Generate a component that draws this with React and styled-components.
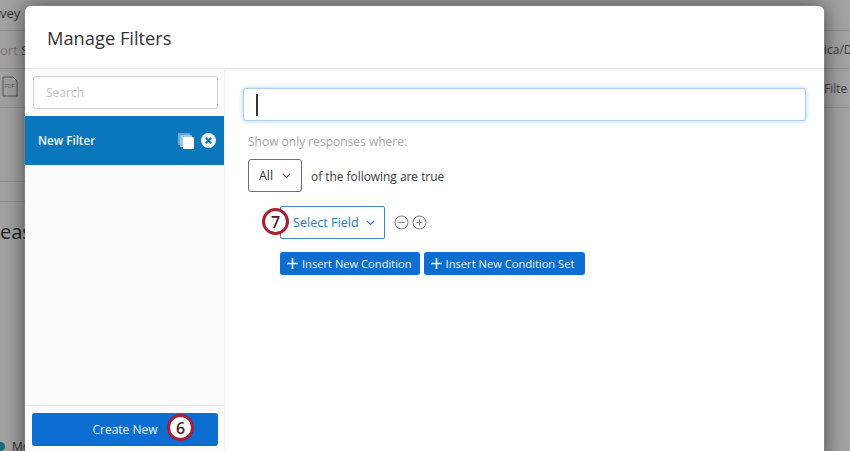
import React from 'react'
import styled, { createGlobalStyle } from 'styled-components'

const Global = createGlobalStyle`
    html, body {
        margin: 0;
        height: 100%;
        overflow: hidden;
    }
    body {
        font-family: "Open Sans", "Liberation Sans", sans-serif;
        color: #3b3b3b;
    }
`;

const Page = styled.div`
    position: relative;
    width: 850px;
    height: 451px;
    overflow: hidden;
    background: #a3a3a3;
`;

const BackRow = styled.div`
    display: flex;
    justify-content: space-between;
    align-items: center;
    box-sizing: border-box;
    width: ${p => p.$short ? '100px' : '100%'};
    height: ${p => p.$h}px;
    padding-bottom: ${p => p.$pb || 0}px;
    border-bottom: ${p => p.$line ? '1px solid #8f8f8f' : 'none'};
    font-size: 13px;
    color: #333;
    white-space: nowrap;
`;

const BackLeft = styled.span`
    margin-left: ${p => p.$x}px;
    color: ${p => p.$color || '#333'};
    font-size: ${p => p.$size || 13}px;
`;

const BackStrong = styled.span`
    color: #333;
`;

const BackRight = styled.span`
    width: 26px;
    overflow: hidden;
    color: #3c3c3c;
    font-size: 12px;
`;

const MoRow = styled.div`
    position: absolute;
    left: 0;
    bottom: -4px;
    display: flex;
    align-items: center;
    gap: 7px;
    font-size: 12px;
    color: #333;
`;

const Dot = styled.i`
    width: 9px;
    height: 9px;
    margin-left: -4px;
    border-radius: 50%;
    background: #0f6f78;
`;

const Modal = styled.div`
    position: absolute;
    left: 25px;
    top: 6px;
    width: 799px;
    height: 460px;
    display: flex;
    flex-direction: column;
    background: #fff;
    border-radius: 6px 6px 0 0;
    box-shadow: 0 0 1px rgba(255, 255, 255, 0.8), 0 0 22px rgba(0, 0, 0, 0.6);
`;

const Header = styled.div`
    display: flex;
    align-items: center;
    box-sizing: border-box;
    height: 63px;
    padding: 0 0 0 22px;
    border-bottom: 1px solid #e6e6e6;
    font-size: 18.3px;
    font-weight: 400;
    color: #333;
`;

const Body = styled.div`
    flex: 1;
    display: flex;
    min-height: 0;
`;

const Sidebar = styled.div`
    display: flex;
    flex-direction: column;
    width: 199px;
    height: 383px;
    background: #fbfbfb;
    border-right: 1px solid #eeeeee;
`;

const SearchWrap = styled.div`
    padding: 7px 6px 7px 8px;
`;

const SearchBox = styled.div`
    display: flex;
    align-items: center;
    box-sizing: border-box;
    height: 33px;
    padding-left: 12px;
    background: #fff;
    border: 1px solid #cfcfcf;
    border-radius: 3px;
    font-size: 12px;
    color: #c4c4c4;
`;

const FilterItem = styled.div`
    display: flex;
    align-items: center;
    justify-content: space-between;
    box-sizing: border-box;
    height: 49px;
    padding: 0 8px 0 13px;
    background: #0a77bd;
    color: #f2f8fc;
    font-size: 11.6px;
    font-weight: 600;
`;

const ItemIcons = styled.div`
    display: flex;
    align-items: center;
    gap: 7px;
`;

const Spacer = styled.div`
    flex: 1;
`;

const SideFooter = styled.div`
    position: relative;
    padding: 7px 6px 6px 7px;
    border-top: 1px solid #ececec;
`;

const CreateButton = styled.div`
    display: flex;
    align-items: center;
    justify-content: center;
    box-sizing: border-box;
    height: 33px;
    background: #0b6ed0;
    border-radius: 3px;
    color: #f0f6fc;
    font-size: 12px;
    font-weight: 400;
`;

const Badge = styled.div`
    position: absolute;
    left: ${p => p.$x}px;
    top: ${p => p.$y}px;
    display: flex;
    align-items: center;
    justify-content: center;
    box-sizing: border-box;
    width: 27px;
    height: 27px;
    background: #fff;
    border: 3px solid #ac1f33;
    border-radius: 50%;
    color: #4a2226;
    font-size: 16px;
    font-weight: 600;
`;

const Main = styled.div`
    flex: 1;
    padding: 19px 18px 0 18px;
`;

const NameInput = styled.div`
    display: flex;
    align-items: center;
    box-sizing: border-box;
    height: 33px;
    padding-left: 12px;
    background: #fff;
    border: 1px solid #a9cfe9;
    border-radius: 3px;
    box-shadow: 0 0 4px rgba(90, 170, 225, 0.55);
`;

const Caret = styled.i`
    width: 1.5px;
    height: 22px;
    background: #333;
`;

const Hint = styled.div`
    margin: 12px 0 0 5px;
    font-size: 12px;
    line-height: 17px;
    color: #a6a6a6;
`;

const MatchRow = styled.div`
    display: flex;
    align-items: center;
    gap: 9px;
    margin: 9px 0 0 5px;
    font-size: 11.9px;
    color: #3c3c3c;
`;

const AllSelect = styled.div`
    display: flex;
    align-items: center;
    justify-content: center;
    gap: 9px;
    box-sizing: border-box;
    width: 54px;
    height: 33px;
    background: #fff;
    border: 1px solid #6f6f6f;
    border-radius: 3px;
    font-size: 12.5px;
    color: #333;
`;

const ConditionRow = styled.div`
    position: relative;
    display: flex;
    align-items: center;
    gap: 9px;
    margin: 14px 0 0 37px;
`;

const FieldSelect = styled.div`
    display: flex;
    align-items: center;
    justify-content: space-between;
    box-sizing: border-box;
    width: 105px;
    height: 33px;
    padding: 0 9px 0 12px;
    background: #fff;
    border: 1px solid #3f85c7;
    border-radius: 2px;
    color: #2a78c5;
    font-size: 12.6px;
`;

const RoundIcons = styled.div`
    display: flex;
    align-items: center;
    gap: 3px;
`;

const InsertRow = styled.div`
    display: flex;
    gap: 4px;
    margin: 13px 0 0 37px;
`;

const InsertButton = styled.div`
    display: flex;
    align-items: center;
    gap: 3px;
    box-sizing: border-box;
    height: 23px;
    padding: 0 ${p => p.$pr || 8}px 0 6px;
    background: #0b6ed0;
    border-radius: 3px;
    color: #f2f7fd;
    font-size: 11.15px;
    white-space: nowrap;
`;

function Chevron({ color }) {
    return (
        <svg width="9" height="6" viewBox="0 0 9 6" fill="none" stroke={color} strokeWidth="1.1">
            <path d="M1 1l3.5 3.5L8 1" />
        </svg>
    )
}

function CopyIcon() {
    return (
        <svg width="16" height="16" viewBox="0 0 16 16">
            <rect x="0" y="0" width="12" height="12" rx="1" fill="#6aa9d6" />
            <rect x="2" y="2" width="12" height="12" rx="1" fill="#9cc6e3" />
            <rect x="5" y="4" width="11" height="12" fill="#fff" />
        </svg>
    )
}

function CloseIcon() {
    return (
        <svg width="15" height="15" viewBox="0 0 15 15">
            <circle cx="7.5" cy="7.5" r="7.5" fill="#f6fafd" />
            <path d="M4.8 4.8l5.4 5.4M10.2 4.8l-5.4 5.4" stroke="#0a77bd" strokeWidth="2" />
        </svg>
    )
}

function RoundIcon({ plus }) {
    return (
        <svg width="15" height="15" viewBox="0 0 15 15" fill="none" stroke="#7a7a7a" strokeWidth="1">
            <circle cx="7.5" cy="7.5" r="6.5" />
            <path d="M4.5 7.5h6" />
            {plus && <path d="M7.5 4.5v6" />}
        </svg>
    )
}

function PlusIcon() {
    return (
        <svg width="13" height="13" viewBox="0 0 13 13" stroke="#f4f8fd" strokeWidth="1.6">
            <path d="M6.5 1v11M1 6.5h11" />
        </svg>
    )
}

function PdfIcon() {
    return (
        <svg width="16" height="21" viewBox="0 0 16 21" fill="none">
            <path d="M1 1h10l4 4v15H1z" stroke="#555" strokeWidth="1" />
            <text x="2.5" y="12" fontSize="5" fill="#666" fontFamily="Liberation Sans, sans-serif">PDF</text>
        </svg>
    )
}

export default function App() {
    return (
        <Page>
            <Global />
            <BackRow $h={31} $pb={4} $line>
                <BackLeft $x={0}>vey</BackLeft>
            </BackRow>
            <BackRow $h={38} $line>
                <BackLeft $x={0} $color="#777">ort <BackStrong>S</BackStrong></BackLeft>
                <BackRight>ica/D</BackRight>
            </BackRow>
            <BackRow $h={39} $line>
                <BackLeft $x={2}><PdfIcon /></BackLeft>
                <BackRight>Filte</BackRight>
            </BackRow>
            <BackRow $h={74} $short $line />
            <BackRow $h={20} $short $line />
            <BackRow $h={58}>
                <BackLeft $x={0} $size={20} $color="#222">eas</BackLeft>
            </BackRow>
            <MoRow><Dot />Mo</MoRow>

            <Modal>
                <Header>Manage Filters</Header>
                <Body>
                    <Sidebar>
                        <SearchWrap><SearchBox>Search</SearchBox></SearchWrap>
                        <FilterItem>
                            New Filter
                            <ItemIcons><CopyIcon /><CloseIcon /></ItemIcons>
                        </FilterItem>
                        <Spacer />
                        <SideFooter>
                            <CreateButton>Create New</CreateButton>
                            <Badge $x={142} $y={8}>6</Badge>
                        </SideFooter>
                    </Sidebar>
                    <Main>
                        <NameInput><Caret /></NameInput>
                        <Hint>Show only responses where:</Hint>
                        <MatchRow>
                            <AllSelect>All <Chevron color="#555" /></AllSelect>
                            of the following are true
                        </MatchRow>
                        <ConditionRow>
                            <FieldSelect>Select Field <Chevron color="#2a78c5" /></FieldSelect>
                            <RoundIcons><RoundIcon /><RoundIcon plus /></RoundIcons>
                            <Badge $x={-18} $y={2}>7</Badge>
                        </ConditionRow>
                        <InsertRow>
                            <InsertButton><PlusIcon />Insert New Condition</InsertButton>
                            <InsertButton $pr={11}><PlusIcon />Insert New Condition Set</InsertButton>
                        </InsertRow>
                    </Main>
                </Body>
            </Modal>
        </Page>
    )
}
